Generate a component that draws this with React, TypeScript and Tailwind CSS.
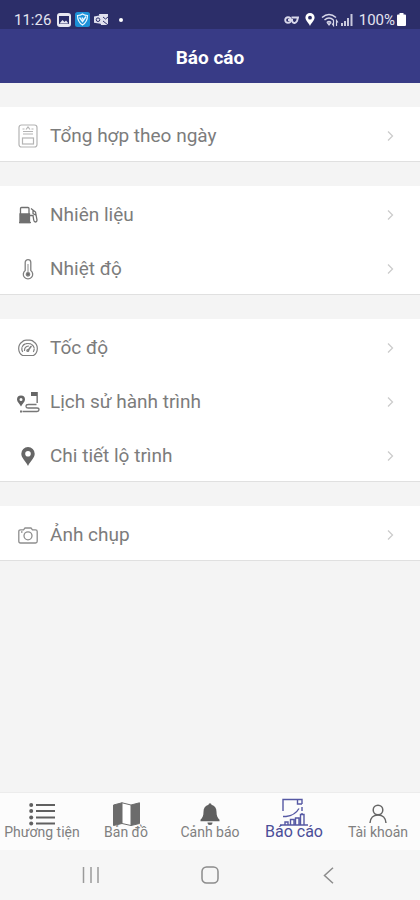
import type { ReactNode } from "react";

type Item = { label: string; icon: ReactNode };

function DayReportIcon() {
  return (
    <svg width="20" height="24" viewBox="0 0 20 24" fill="none" stroke="#b4b4b4" strokeWidth="1.2">
      <rect x="1" y="1" width="18" height="22" rx="2.5" />
      <path d="M4.500 5h2M13.500 5h2M8 5.500l2-2.500 2 2.500M5 7.500h10M5 10h10" />
      <rect x="4.500" y="14" width="11" height="6" />
    </svg>
  );
}

function FuelIcon() {
  return (
    <svg width="19" height="18" viewBox="0 0 19 18" fill="none" stroke="#707070" strokeWidth="1.3">
      <path d="M1.500 16V2.500Q1.500 1.500 2.500 1.500h6.500q1 0 1 1V16" />
      <path d="M1 8h9.500v8.500H1z" fill="#707070" />
      <path d="M0 16.500h12" />
      <path d="M12 2.500l4.500 3.500 1.500 8q0 2-1.500 2t-1.800-2l-.7-4.500H11M14 4.500v3l2.500 1.500" />
    </svg>
  );
}

function ThermometerIcon() {
  return (
    <svg width="12" height="21" viewBox="0 0 12 21" fill="none" stroke="#808080" strokeWidth="1.3">
      <path d="M3.200 11.500V3.500a2.800 2.800 0 0 1 5.600 0v8a4.700 4.700 0 1 1-5.600 0z" />
      <path d="M6 5v8" strokeWidth="0.9" />
      <circle cx="6" cy="15.300" r="1.700" fill="#666" />
    </svg>
  );
}

function SpeedIcon() {
  return (
    <svg width="20" height="18" viewBox="0 0 20 18" fill="none" stroke="#808080" strokeWidth="1.200" strokeLinecap="round">
      <path d="M4.500 16.500C-.5 13.500-.5 6 4 3q1.500-1.800 4-1.800h4q2.500 0 4 1.800c4.500 3 4.500 10.500-.5 13.500z" />
      <path d="M4.500 12.500C2.500 8.500 5 4.500 10 4.500s7.500 4 5.500 8" strokeDasharray="4 1.200" />
      <path d="M6.500 11.500q0-4 4-4.500" />
      <path d="M10 11.500l3-4" strokeWidth="1.600" />
      <circle cx="9.800" cy="11.500" r="1" />
    </svg>
  );
}

function RouteIcon() {
  return (
    <svg width="23" height="22" viewBox="0 0 23 22" fill="none" stroke="#777" strokeWidth="1.300">
      <path fill="#666" stroke="none" fillRule="evenodd" d="M4 4.500a4 4 0 0 1 4 4c0 2.600-2.500 4-4 7-1.500-3-4-4.400-4-7a4 4 0 0 1 4-4zm0 2.500a1.500 1.500 0 1 0 0 3 1.500 1.500 0 0 0 0-3z" />
      <path fill="#666" stroke="none" d="M14 1h6.800v11h-1.300V5H14z" />
      <path d="M19.500 13.500h-8q-2.500 0-2.500 1.800T11.500 17H20q2 0 2 1.700t-2 1.800H5.500" />
      <path d="M3 20.500h2" strokeWidth="2.200" />
    </svg>
  );
}

function PinIcon({ className }: { className: string }) {
  return (
    <svg className={className} viewBox="0 0 14 19" fill="currentColor" fillRule="evenodd">
      <path d="M7 0a6.700 6.700 0 0 1 6.700 6.700C13.700 11 9.500 13.500 7 19 4.500 13.500.3 11 .3 6.700A6.700 6.700 0 0 1 7 0zm0 4a2.800 2.800 0 1 0 0 5.600A2.800 2.800 0 0 0 7 4z" />
    </svg>
  );
}

function CameraIcon() {
  return (
    <svg width="20" height="17" viewBox="0 0 20 17" fill="none" stroke="#8e8e8e" strokeWidth="1.300">
      <path d="M2.500 2.800h3L7 1h6l1.500 1.800h3q1.700 0 1.700 1.700v9.800q0 1.700-1.700 1.700h-15Q.8 16 .8 14.300V4.500q0-1.700 1.700-1.700z" />
      <circle cx="10" cy="8.800" r="4" />
      <path d="M3 5h1.500" />
    </svg>
  );
}

const groups: Item[][] = [
  [{ label: "Tổng hợp theo ngày", icon: <DayReportIcon /> }],
  [
    { label: "Nhiên liệu", icon: <FuelIcon /> },
    { label: "Nhiệt độ", icon: <ThermometerIcon /> },
  ],
  [
    { label: "Tốc độ", icon: <SpeedIcon /> },
    { label: "Lịch sử hành trình", icon: <RouteIcon /> },
    { label: "Chi tiết lộ trình", icon: <PinIcon className="h-[19px] w-3.5" /> },
  ],
  [{ label: "Ảnh chụp", icon: <CameraIcon /> }],
];

const tabs: (Item & { active?: boolean })[] = [
  {
    label: "Phương tiện",
    icon: (
      <svg width="27" height="24" viewBox="0 0 27 24" fill="#606060" stroke="#606060">
        <path d="M7 3h19M7 9h19M7 15.500h19M7 21.500h19" strokeWidth="2" />
        <g stroke="none">
          <circle cx="2.200" cy="3" r="2" />
          <circle cx="2.200" cy="9" r="2" />
          <circle cx="2.200" cy="15.500" r="2" />
          <circle cx="2.200" cy="21.500" r="2" />
        </g>
      </svg>
    ),
  },
  {
    label: "Bản đồ",
    icon: (
      <svg width="27" height="24" viewBox="0 0 27 24" fill="#6c6c6c" stroke="#6c6c6c">
        <path d="M.5 3L9 .8v20.700L.5 23.500zM18 3l8.500-2.200v20.700L18 23.500z" />
        <path d="M9 .8L18 3v20.500l-9-2z" fill="#fff" />
      </svg>
    ),
  },
  {
    label: "Cảnh báo",
    icon: (
      <svg width="20" height="24" viewBox="0 0 20 24" fill="#606060">
        <path d="M8.500 2.800a1.500 1.500 0 0 1 3 0c3.300.8 5 3.500 5 7 0 4 1 6.200 3 8v1.400H.5v-1.400c2-1.800 3-4 3-8 0-3.500 1.700-6.200 5-7zM7.500 20.500h5a2.500 2.500 0 0 1-5 0z" />
      </svg>
    ),
  },
  {
    label: "Báo cáo",
    active: true,
    icon: (
      <svg width="28" height="28" viewBox="0 0 28 28" fill="none" stroke="#5558a3" strokeWidth="1.400">
        <path d="M3 13V1.500h14.500M17.500 1v5H22M17.500 1.500H22V6M22 9v4M3 18.500h3q9-1 13-8M22 15v2" />
        <path d="M0 27h28M5 27v-3h3v3M10.500 27v-5.500H14V27M15.500 27v-7H19v7M20.500 27V16.500H24V27" />
      </svg>
    ),
  },
  {
    label: "Tài khoản",
    icon: (
      <svg width="18" height="22" viewBox="0 0 18 22" fill="none" stroke="#666" strokeWidth="1.500">
        <circle cx="9" cy="6" r="4.800" />
        <path d="M1 19c.3-5 3.500-8 8-8s7.700 3 8 8" />
      </svg>
    ),
  },
];

function StatusBar() {
  return (
    <div className="flex h-[29px] items-center justify-between bg-[#2c2e69] px-3.5 pt-2.5 text-[15px] text-[#e4e4f0]">
      <div className="flex items-center gap-1">
        <span className="mr-0.5 leading-4">11:26</span>
        <svg width="14" height="14" viewBox="0 0 14 14">
          <rect width="14" height="14" rx="3" fill="#e8e8f2" />
          <path d="M2 11V3h10v8z" fill="#2c2e69" />
          <path d="M2.500 10.500L5.500 7l2 2L9 7.500l2.500 3z" fill="#e8e8f2" />
        </svg>
        <svg width="15" height="15" viewBox="0 0 15 15" fill="none">
          <rect width="15" height="15" rx="2.500" fill="#1b91d8" />
          <path d="M2.500 3.500q3 0 5-1.500 2 1.500 5 1.500 0 6.500-5 9.500-5-3-5-9.500z" stroke="#e8f6ff" strokeWidth="1.200" />
          <path d="M4.500 5.500l3 4 3.500-5M7 5.500l1 2" stroke="#e8f6ff" strokeWidth="1.400" />
        </svg>
        <svg width="15" height="14" viewBox="0 0 15 14" fill="#e0e0ee">
          <path d="M5 1h9v11H7z" />
          <path d="M0 3.500L8 2v9L0 9.800z" />
          <circle cx="4" cy="6.700" r="1.800" fill="none" stroke="#2c2e69" />
          <path d="M9 4l2.500 2L14 4M9 8l5 4" stroke="#2c2e69" fill="none" />
        </svg>
        <span className="ml-1.5 size-1 rounded-full bg-white" />
      </div>
      <div className="flex items-center gap-0.5">
        <svg width="15" height="10" viewBox="0 0 15 10" fill="none" stroke="#d8d8ea" strokeWidth="1.900">
          <circle cx="4" cy="5" r="2.800" />
          <path d="M4 5h5M7.500 2.500H14L13 6q-2 3-4 1.500L7.500 5" />
        </svg>
        <PinIcon className="mx-1 h-[13px] w-2.5 text-white" />
        <svg width="18" height="14" viewBox="0 0 18 14" fill="none" stroke="#d8d8ea" strokeWidth="1.500">
          <path d="M1 4.500q7-6 14 0M3.500 7q4.500-4 9 0M6 9.500q2-2 4 0" />
          <path d="M8 12l-1.500-2h3zM12.500 7v5.500l-1.500-2M15.500 13V7.500l1.500 2" strokeWidth="1.200" />
        </svg>
        <svg width="12" height="12" viewBox="0 0 12 12" fill="#c8c8dc">
          <path d="M0 9h2v3H0zM3 7h2v5H3zM6 4h2v8H6zM9.500 0h2v12h-2z" />
        </svg>
        <div className="ml-1 flex items-center gap-0.5">
          <span className="leading-4">100%</span>
          <svg width="9" height="13" viewBox="0 0 9 13" fill="#fff">
            <path d="M2.500 0h4v1.500H8q1 0 1 1V12q0 1-1 1H1q-1 0-1-1V2.500q0-1 1-1h1.500z" />
          </svg>
        </div>
      </div>
    </div>
  );
}

function ReportRow({ label, icon }: Item) {
  return (
    <li>
      <button type="button" className="flex h-[54px] w-full items-center pt-1 pr-6.5 pl-4 text-left">
        <span className="flex w-6 shrink-0 justify-center text-[#666]">{icon}</span>
        <span className="ml-2.5 flex-1 text-[19px] leading-6 text-[#7c7c7c]">{label}</span>
        <svg width="7" height="10" viewBox="0 0 7 10" fill="none" stroke="#cccccc" strokeWidth="1.300">
          <path d="M1 .5L5.500 5 1 9.500" />
        </svg>
      </button>
    </li>
  );
}

export default function App() {
  return (
    <div className="flex min-h-screen flex-col bg-[#f4f4f4] font-[Roboto,'Noto_Sans',sans-serif]">
      <StatusBar />
      <header className="flex h-[54px] items-center justify-center bg-[#383b86] pt-1">
        <h1 className="text-[19px] leading-6 font-bold text-white">Báo cáo</h1>
      </header>
      <main className="flex flex-1 flex-col gap-6 pt-6">
        {groups.map((group) => (
          <ul key={group[0].label} className="border-b border-[#e0e0e0] bg-white">
            {group.map((item) => (
              <ReportRow key={item.label} {...item} />
            ))}
          </ul>
        ))}
      </main>
      <nav className="grid h-[58px] grid-cols-5 border-t border-[#ececec] bg-[#fcfcfc]">
        {tabs.map(({ label, icon, active }) => (
          <button
            key={label}
            type="button"
            aria-current={active ? "page" : undefined}
            className="flex flex-col items-center whitespace-nowrap"
          >
            <span className="flex h-[33px] items-end">{icon}</span>
            <span className={active ? "text-base leading-3 text-[#4b4e98]" : "text-sm leading-3 text-[#808080]"}>
              {label}
            </span>
          </button>
        ))}
      </nav>
      <div className="grid h-[50px] grid-cols-3 items-center justify-items-center bg-[#f6f6f6] px-8">
        <button type="button" aria-label="Recent apps">
          <svg width="18" height="16" viewBox="0 0 18 16" stroke="#9a9a9a" strokeWidth="1.500">
            <path d="M1.500 0v16M9 0v16M16 0v16" />
          </svg>
        </button>
        <button type="button" aria-label="Home">
          <svg width="18" height="18" viewBox="0 0 18 18" fill="none" stroke="#8c8c8c" strokeWidth="1.500">
            <rect x="1" y="1" width="16" height="16" rx="4.500" />
          </svg>
        </button>
        <button type="button" aria-label="Back">
          <svg width="11" height="17" viewBox="0 0 11 17" fill="none" stroke="#8c8c8c" strokeWidth="1.500">
            <path d="M10 .8L1.500 8.500l8.500 7.700" />
          </svg>
        </button>
      </div>
    </div>
  );
}
